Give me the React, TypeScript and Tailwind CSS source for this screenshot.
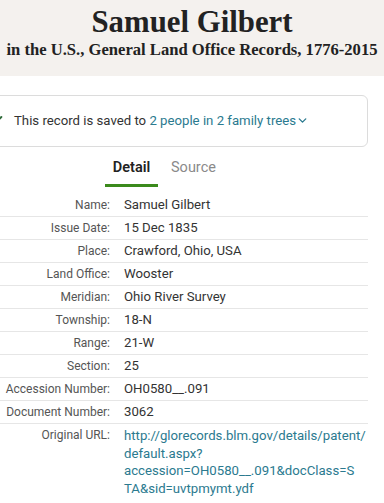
import { ChevronDown, Check } from "lucide-react";

const rows: [string, string][] = [
  ["Name:", "Samuel Gilbert"],
  ["Issue Date:", "15 Dec 1835"],
  ["Place:", "Crawford, Ohio, USA"],
  ["Land Office:", "Wooster"],
  ["Meridian:", "Ohio River Survey"],
  ["Township:", "18-N"],
  ["Range:", "21-W"],
  ["Section:", "25"],
  ["Accession Number:", "OH0580__.091"],
  ["Document Number:", "3062"],
];

const urlLines = [
  "http://glorecords.blm.gov/details/patent/",
  "default.aspx?",
  "accession=OH0580__.091&docClass=S",
  "TA&sid=uvtpmymt.ydf",
];

export default function App() {
  return (
    <div className="h-[503px] w-[384px] overflow-hidden bg-white font-['Roboto',sans-serif] text-[#333]">
      <div className="flex h-[76px] flex-col items-center bg-[#f4f1ee] pt-[5px] font-['Liberation_Serif',serif] font-bold text-[#222]">
        <h1 className="text-[30.8px] leading-[35px]">Samuel Gilbert</h1>
        <p className="whitespace-nowrap text-[16.6px] leading-[20px]">
          in the U.S., General Land Office Records, 1776-2015
        </p>
      </div>

      <div className="-ml-[29px] mt-[19px] flex h-[52px] w-[397px] items-center gap-[10px] rounded-md border border-[#dcdcdc] pl-[16px]">
        <Check className="h-4 w-4 text-[#2f6b3a]" strokeWidth={3} />
        <p className="whitespace-nowrap text-[13.2px]">
          This record is saved to{" "}
          <span className="text-[#2b7a8f]">
            2 people in 2 family trees
            <ChevronDown className="inline h-[13px] w-[13px] align-[-2px]" strokeWidth={2.5} />
          </span>
        </p>
      </div>

      <div className="mt-[10px] flex gap-[13px] pl-[105px] text-[14.5px]">
        <div className="flex w-[53px] flex-col items-center">
          <span className="font-semibold leading-[22px] text-[#222]">Detail</span>
          <span className="mt-[5px] h-[3px] w-full bg-[#3b8a1c]" />
        </div>
        <span className="leading-[22px] text-[#8a8a8a]">Source</span>
      </div>

      <div className="mt-[7px] w-[368px] text-[13.2px]">
        {rows.map(([label, value]) => (
          <div
            key={label}
            className="grid h-[23px] grid-cols-[110px_1fr] items-center gap-[14px] border-b border-[#e6e6e6]"
          >
            <span className="text-right text-[12px] text-[#555]">{label}</span>
            <span>{value}</span>
          </div>
        ))}
        <div className="grid grid-cols-[110px_1fr] gap-[14px] pt-[3px]">
          <span className="text-right text-[12px] leading-[17.5px] text-[#555]">Original URL:</span>
          <div className="leading-[17.5px] text-[#2b7a8f]">
            {urlLines.map((l) => (
              <div key={l} className="whitespace-nowrap">
                {l}
              </div>
            ))}
          </div>
        </div>
      </div>
    </div>
  );
}
